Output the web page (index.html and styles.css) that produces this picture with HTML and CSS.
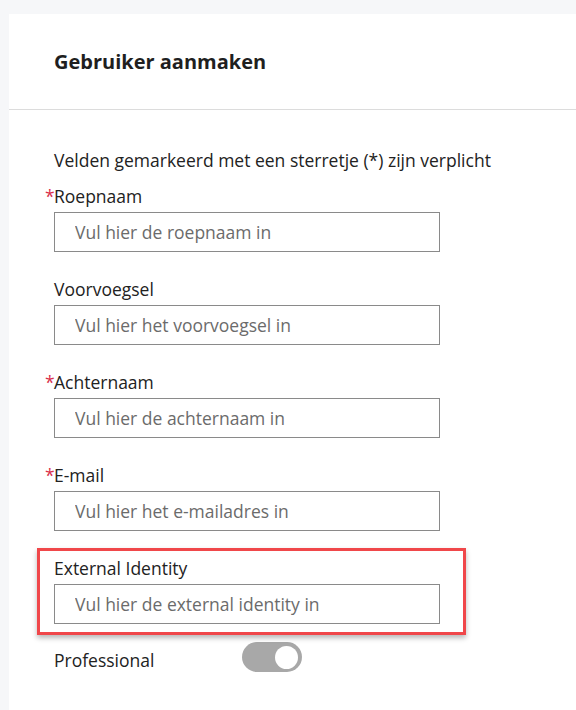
FILE: index.html
```html
<!DOCTYPE html>
<html lang="nl">
<head>
<meta charset="utf-8">
<link rel="stylesheet" href="styles.css">
</head>
<body>
<div class="page">
  <div class="card">
    <div class="card-header">
      <h1 class="title">Gebruiker aanmaken</h1>
    </div>
    <div class="card-body">
      <p class="intro">Velden gemarkeerd met een sterretje (*) zijn verplicht</p>
      <div class="field">
        <label class="label"><span class="req">*</span>Roepnaam</label>
        <input class="input" type="text" placeholder="Vul hier de roepnaam in">
      </div>
      <div class="field">
        <label class="label">Voorvoegsel</label>
        <input class="input" type="text" placeholder="Vul hier het voorvoegsel in">
      </div>
      <div class="field">
        <label class="label"><span class="req">*</span>Achternaam</label>
        <input class="input" type="text" placeholder="Vul hier de achternaam in">
      </div>
      <div class="field">
        <label class="label"><span class="req">*</span>E-mail</label>
        <input class="input" type="text" placeholder="Vul hier het e-mailadres in">
      </div>
      <div class="field highlighted">
        <label class="label">External Identity</label>
        <input class="input" type="text" placeholder="Vul hier de external identity in">
        <div class="highlight"></div>
      </div>
      <div class="toggle-row">
        <span class="toggle-label">Professional</span>
        <span class="toggle"><span class="knob"></span></span>
      </div>
    </div>
  </div>
</div>
</body>
</html>
```
FILE: styles.css
```css
* { box-sizing: border-box; }
html, body { margin: 0; padding: 0; }
body {
  background: #f6f7f9;
  font-family: "Open Sans", "Noto Sans", sans-serif;
  color: #222;
  width: 576px;
  height: 710px;
  overflow: hidden;
}
.page {
  padding: 14px 0 0 9px;
}
.card {
  background: #fff;
  height: 700px;
}
.card-header {
  height: 96px;
  border-bottom: 1px solid #dcdcdc;
  padding-left: 45px;
  display: flex;
  align-items: center;
}
.title {
  margin: 0;
  font-size: 20px;
  line-height: 28px;
  font-weight: 700;
  color: #1f1f1f;
}
.card-body {
  padding: 38px 0 0 45px;
}
.intro {
  margin: 0 0 12px 0;
  font-size: 17.5px;
  line-height: 24px;
}
.field {
  position: relative;
  display: flex;
  flex-direction: column;
  gap: 4px;
  margin-bottom: 25px;
  width: 386px;
}
.label {
  font-size: 17.5px;
  line-height: 24px;
  color: #222;
}
.req {
  color: #d9304c;
  margin-left: -9px;
  display: inline-block;
  width: 9px;
}
.input {
  width: 386px;
  height: 40px;
  border: 1px solid #8a8a8a;
  border-radius: 0;
  padding: 0 0 1px 20px;
  font-family: "Open Sans", "Noto Sans", sans-serif;
  font-size: 17.5px;
  color: #222;
  outline: none;
  background: #fff;
}
.input::placeholder {
  color: #6b6b6b;
  opacity: 1;
}
.highlight {
  position: absolute;
  left: -17px;
  top: -8px;
  width: 429px;
  height: 87px;
  border: 3px solid #f0474a;
  box-shadow: 0 3px 5px rgba(0, 0, 0, 0.28);
  pointer-events: none;
}
.toggle-row {
  display: flex;
  align-items: center;
  margin-top: -7px;
}
.toggle-label {
  width: 188px;
  font-size: 17.5px;
  line-height: 24px;
  padding-top: 5px;
}
.toggle {
  width: 60px;
  height: 30px;
  border-radius: 15px;
  background: #a8a8a8;
  display: flex;
  align-items: center;
  justify-content: flex-end;
  padding-right: 4px;
}
.knob {
  width: 23px;
  height: 23px;
  border-radius: 50%;
  background: #fff;
}
```
